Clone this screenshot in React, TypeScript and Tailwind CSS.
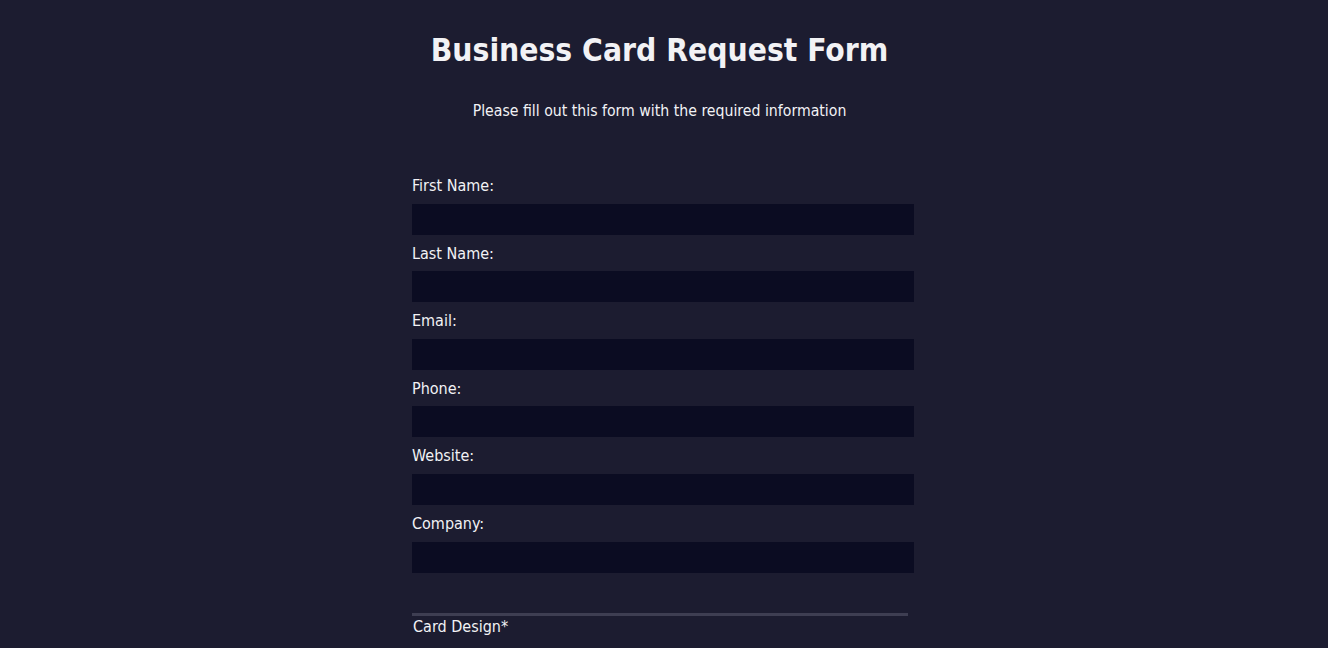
import React from "react";

const fields = ["First Name:", "Last Name:", "Email:", "Phone:", "Website:", "Company:"];

export default function App() {
  return (
    <div
      className="min-h-[648px] w-full bg-[#1c1c30] text-[#f2f2f5]"
      style={{ fontFamily: '"DejaVu Sans Condensed", "DejaVu Sans", sans-serif' }}
    >
      <div className="flex flex-col items-center pr-[9px] pt-[28px]">
        <h1 className="text-[31.5px] font-bold leading-[44px]">Business Card Request Form</h1>
        <p className="mt-[29px] text-[15.7px] leading-[20px]">Please fill out this form with the required information</p>
      </div>
      <form className="mx-auto mt-[55px] w-[504px]">
        {fields.map((f) => (
          <div key={f} className="flex flex-col">
            <label className="block h-[27.6px] text-[16px] leading-[20px]">{f}</label>
            <input className="block h-[31px] w-[502px] bg-[#0b0c22] outline-none" />
            <div className="h-[9px]" />
          </div>
        ))}
        <div className="mt-[31px] h-[3px] w-[496px] bg-[#3e3e52]" />
        <div className="pl-[1px] pt-[1px] text-[16px] leading-[20px]">Card Design*</div>
      </form>
    </div>
  );
}
